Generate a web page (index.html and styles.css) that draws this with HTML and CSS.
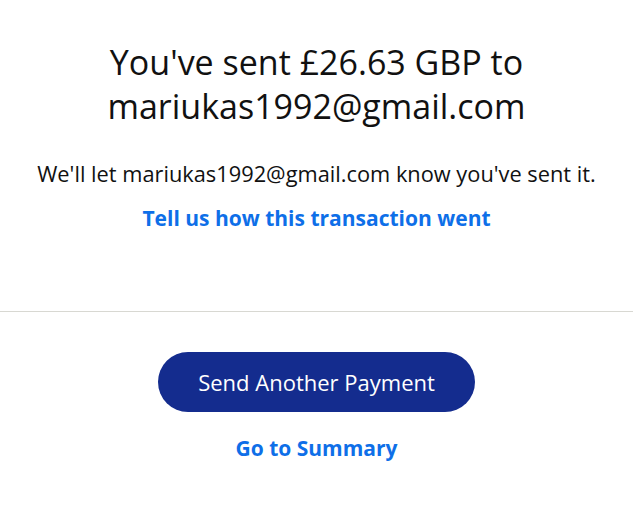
FILE: index.html
```html
<!DOCTYPE html>
<html>
<head>
<meta charset="utf-8">
<link rel="stylesheet" href="styles.css">
</head>
<body>
<main class="page">
  <section class="top">
    <h1 class="title">You've sent £26.63 GBP to mariukas1992@gmail.com</h1>
    <p class="note">We'll let mariukas1992@gmail.com know you've sent it.</p>
    <a class="link feedback" href="#">Tell us how this transaction went</a>
  </section>
  <section class="actions">
    <button class="primary">Send Another Payment</button>
    <a class="link summary" href="#">Go to Summary</a>
  </section>
</main>
</body>
</html>
```

FILE: styles.css
```css
html, body {
  margin: 0;
  padding: 0;
  background: #fff;
}
body {
  font-family: "Open Sans", Lato, sans-serif;
  color: #111;
}
.page {
  width: 633px;
}
.top {
  display: flex;
  flex-direction: column;
  align-items: center;
  text-align: center;
  padding: 40px 0 0;
  height: 312px;
  box-sizing: border-box;
  border-bottom: 1px solid #d8d8d2;
}
.title {
  margin: 0;
  font-size: 34px;
  font-weight: 400;
  line-height: 44px;
  width: 480px;
}
.note {
  margin: 33px 0 0;
  font-size: 21.8px;
  line-height: 26px;
  white-space: nowrap;
}
.link {
  color: #0e6fe8;
  font-weight: 700;
  text-decoration: none;
  font-size: 21px;
  line-height: 26px;
  white-space: nowrap;
}
.feedback {
  margin-top: 18px;
}
.actions {
  display: flex;
  flex-direction: column;
  align-items: center;
  padding-top: 40px;
}
.primary {
  width: 317px;
  height: 60px;
  border: none;
  border-radius: 30px;
  background: #142c8e;
  color: #fff;
  font-family: inherit;
  font-size: 22px;
  font-weight: 500;
}
.summary {
  margin-top: 23px;
}
```
